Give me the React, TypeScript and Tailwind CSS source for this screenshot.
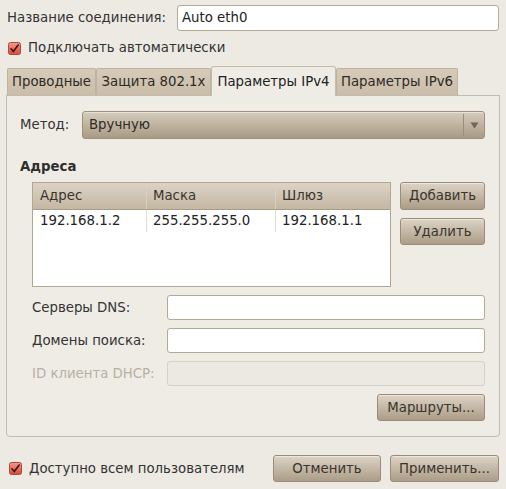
const font = { fontFamily: '"DejaVu Sans", Verdana, sans-serif' };

function Check() {
  return (
    <svg width="13" height="13" viewBox="0 0 13 13" className="shrink-0">
      <defs>
        <linearGradient id="cb" x1="0" y1="0" x2="0" y2="1">
          <stop offset="0" stopColor="#f49a88" />
          <stop offset="1" stopColor="#d8473a" />
        </linearGradient>
      </defs>
      <rect x="0.5" y="0.5" width="12" height="12" rx="2" fill="url(#cb)" stroke="#b0463a" />
      <path d="M3 6.8 L5.3 9.6 L10.2 3" fill="none" stroke="#3a1510" strokeWidth="1.6" strokeLinecap="round" strokeLinejoin="round" />
    </svg>
  );
}

function Button({ label, className }: { label: string; className: string }) {
  return (
    <div
      className={`flex items-center justify-center rounded-[3px] border border-[#9a8c78] bg-gradient-to-b from-[#ddd4c6] to-[#ab9d87] text-[13.3px] text-[#3a342d] shadow-[inset_0_1px_0_rgba(255,255,255,0.45)] ${className}`}
    >
      {label}
    </div>
  );
}

function Field({ label, disabled }: { label: string; disabled?: boolean }) {
  return (
    <div className="flex h-[25px] items-center">
      <div className={`w-[135px] text-[13.3px] ${disabled ? 'text-[#b7b0a5]' : 'text-[#333]'}`}>{label}</div>
      <div
        className={`h-full flex-1 rounded-[3px] border ${
          disabled ? 'border-[#d6d0c5] bg-[#ece9e2]' : 'border-[#b3a994] bg-white'
        }`}
      />
    </div>
  );
}

const tabs = [
  { label: 'Проводные', w: 'w-[89px]' },
  { label: 'Защита 802.1x', w: 'w-[115px]' },
  { label: 'Параметры IPv4', w: 'w-[125px]', active: true },
  { label: 'Параметры IPv6', w: 'w-[122px]' },
];

export default function App() {
  return (
    <div className="h-[489px] w-[506px] overflow-hidden bg-[#edeae3] pt-[5px] text-[#333]" style={font}>
      {/* connection name */}
      <div className="flex h-[26px] items-center pr-[7px]">
        <div className="w-[177px] pl-[7px] text-[13.3px]">Название соединения:</div>
        <div className="flex h-full flex-1 items-center rounded-[3px] border border-[#b3a994] bg-white px-[4px] text-[13.3px] text-[#222]">
          Auto eth0
        </div>
      </div>

      <div className="mt-[7px] flex h-[20px] items-center gap-[7px] pl-[8px] text-[13.3px]">
        <Check />
        <span>Подключать автоматически</span>
      </div>

      {/* tabs */}
      <div className="mt-[8px] flex h-[29px] items-end pl-[7px]">
        {tabs.map((t) =>
          t.active ? (
            <div
              key={t.label}
              className={`relative z-10 -mb-px flex h-[30px] items-center justify-center rounded-t-[3px] border border-b-0 border-[#c3bbad] bg-[#efece6] text-[13.3px] text-[#222] ${t.w}`}
            >
              {t.label}
            </div>
          ) : (
            <div
              key={t.label}
              className={`flex h-[27px] items-center justify-center rounded-t-[2px] border-x border-t border-[#bfb39f] bg-gradient-to-b from-[#d6cbb9] to-[#cabda9] text-[13.3px] text-[#2e2a25] ${t.w}`}
            >
              {t.label}
            </div>
          )
        )}
      </div>

      {/* panel */}
      <div className="mx-[6px] flex h-[342px] flex-col rounded-b-[4px] border border-[#c3bbad] bg-[#efece6] pl-[13px] pr-[14px] pt-[15px]">
        <div className="flex h-[28px] items-center">
          <div className="w-[62px] text-[13.3px]">Метод:</div>
          <div className="flex h-full flex-1 items-center rounded-[3px] border border-[#9e907c] bg-gradient-to-b from-[#d6ccbc] to-[#a99b85] shadow-[inset_0_1px_0_rgba(255,255,255,0.4)]">
            <div className="flex-1 pl-[6px] text-[13.3px] text-[#2e2a25]">Вручную</div>
            <div className="flex h-[22px] w-[21px] items-center justify-center border-l border-[#9a8d79]">
              <svg width="9" height="7" viewBox="0 0 9 7">
                <path d="M0.5 0.5 H8.5 L4.5 6.5 Z" fill="#6f665a" />
              </svg>
            </div>
          </div>
        </div>

        <div className="mt-[19px] flex h-[18px] items-center text-[13.3px] font-bold text-[#2e2e2e]">Адреса</div>

        <div className="mt-[6px] flex gap-[9px] pl-[12px]">
          <div className="flex h-[105px] w-[359px] flex-col border border-[#b2a794] bg-white">
            <div className="flex h-[27px] border-b border-[#a99c87] bg-gradient-to-b from-[#dcd3c5] to-[#c4b7a3] text-[13.3px] text-[#3a342d]">
              <div className="flex w-[114px] items-center border-r border-[#d9d0c2] pl-[7px]">Адрес</div>
              <div className="flex w-[129px] items-center border-r border-[#d9d0c2] pl-[6px]">Маска</div>
              <div className="flex flex-1 items-center pl-[6px]">Шлюз</div>
            </div>
            <div className="flex h-[22px] text-[13.3px] text-[#222]">
              <div className="flex w-[114px] items-center border-r border-[#e2ddd5] pl-[7px]">192.168.1.2</div>
              <div className="flex w-[129px] items-center border-r border-[#e2ddd5] pl-[6px]">255.255.255.0</div>
              <div className="flex flex-1 items-center pl-[6px]">192.168.1.1</div>
            </div>
          </div>
          <div className="flex flex-1 flex-col gap-[8px]">
            <Button label="Добавить" className="h-[28px] w-full" />
            <Button label="Удалить" className="h-[27px] w-full" />
          </div>
        </div>

        <div className="mt-[8px] flex flex-col gap-[8px] pl-[12px]">
          <Field label="Серверы DNS:" />
          <Field label="Домены поиска:" />
          <Field label="ID клиента DHCP:" disabled />
        </div>

        <div className="mt-[8px] flex justify-end">
          <Button label="Маршруты..." className="h-[27px] w-[108px]" />
        </div>
      </div>

      {/* bottom */}
      <div className="mt-[18px] flex h-[27px] items-center pr-[7px]">
        <div className="flex flex-1 items-center gap-[7px] pl-[9px] text-[13.3px]">
          <Check />
          <span>Доступно всем пользователям</span>
        </div>
        <div className="flex gap-[9px]">
          <Button label="Отменить" className="h-[27px] w-[108px]" />
          <Button label="Применить..." className="h-[27px] w-[109px]" />
        </div>
      </div>
    </div>
  );
}
